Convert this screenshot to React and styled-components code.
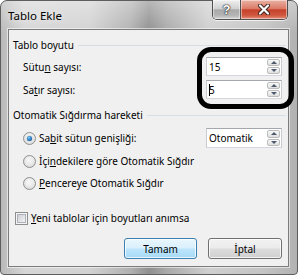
import React from "react";
import styled, { createGlobalStyle } from "styled-components";

const GlobalStyle = createGlobalStyle`
  html, body {
    margin: 0;
    padding: 0;
    background: #ffffff;
  }
  body {
    font-family: "Noto Sans", "DejaVu Sans", sans-serif;
    font-size: 10px;
    color: #000;
  }
`;

const Window = styled.div`
  position: relative;
  width: 298px;
  height: 275px;
  box-sizing: border-box;
  border: 1px solid #5e5e5e;
  border-radius: 7px 7px 4px 4px;
  padding: 0 8px 7px 7px;
  display: flex;
  flex-direction: column;
  background:
    linear-gradient(180deg, rgba(255, 255, 255, 0.35) 0%, rgba(255, 255, 255, 0) 12%),
    linear-gradient(
      90deg,
      #b9b9b9 0%,
      #d6d6d6 8%,
      #d2d2d2 30%,
      #b0b0b0 44%,
      #8f8f8f 50%,
      #a9a9a9 56%,
      #cfcfcf 70%,
      #c4c4c4 88%,
      #b2b2b2 100%
    );
`;

const TitleBar = styled.div`
  height: 28px;
  display: flex;
  justify-content: space-between;
  align-items: flex-start;
`;

const Title = styled.div`
  padding-top: 7px;
  font-size: 11.5px;
  line-height: 15px;
  color: #000;
  text-shadow: 0 0 6px rgba(255, 255, 255, 0.9);
`;

const CaptionButtons = styled.div`
  display: flex;
  margin-top: -1px;
  margin-right: 1px;
  border: 1px solid #4f4f4f;
  border-top: none;
  border-radius: 0 0 5px 5px;
  overflow: hidden;
  box-shadow: 0 1px 0 rgba(255, 255, 255, 0.7);
`;

const CaptionButton = styled.div`
  width: ${(p) => p.$w}px;
  height: 19px;
  display: flex;
  align-items: center;
  justify-content: center;
  background: ${(p) =>
    p.$close
      ? "linear-gradient(180deg, #eab2a4 0%, #dc7c68 45%, #c7412a 52%, #cf563d 80%, #e38f78 100%)"
      : "linear-gradient(180deg, #efefef 0%, #d2d2d2 45%, #a9a9a9 52%, #b4b4b4 80%, #d4d4d4 100%)"};
  box-shadow: inset 0 0 0 1px rgba(255, 255, 255, 0.45);
  & + & {
    border-left: 1px solid #4f4f4f;
  }
`;

const HelpGlyph = styled.span`
  font-family: "Liberation Sans", Arial, sans-serif;
  font-weight: bold;
  font-size: 13px;
  line-height: 13px;
  color: #fff;
  text-shadow: 0 0 1px #222, 0 0 1px #222, 0 0 2px #333;
`;

const Client = styled.div`
  flex: 1;
  box-sizing: border-box;
  background: #f0f0f0;
  border: 1px solid #7c7c7c;
  box-shadow: 0 0 0 1px rgba(255, 255, 255, 0.55);
  padding: 0 6px 0 4px;
  display: flex;
  flex-direction: column;
`;

const GroupHeader = styled.div`
  margin-top: ${(p) => p.$top}px;
  height: 14px;
  display: flex;
  align-items: center;
  line-height: 14px;
  white-space: nowrap;
  &::after {
    content: "";
    flex: 1;
    height: 1px;
    margin-left: 4px;
    margin-right: -4px;
    background: #d5dfe5;
  }
`;

const FieldRow = styled.div`
  margin-top: ${(p) => p.$top}px;
  height: ${(p) => p.$h || 19}px;
  display: flex;
  align-items: center;
  justify-content: space-between;
  padding-left: ${(p) => p.$indent ?? 10}px;
`;

const Label = styled.span`
  line-height: 14px;
  white-space: nowrap;
  & u {
    text-underline-offset: 1px;
  }
`;

const SpinBox = styled.div`
  width: 76px;
  height: ${(p) => p.$h || 19}px;
  box-sizing: border-box;
  display: flex;
  align-items: stretch;
  background: #fff;
  border: 1px solid #abadb3;
  border-color: #a4a7ad #c9ccd2 #d4d7dc #c9ccd2;
  padding: 1px 1px 1px 2px;
`;

const SpinValue = styled.div`
  flex: 1;
  display: flex;
  align-items: center;
  line-height: 14px;
  white-space: nowrap;
`;

const Caret = styled.span`
  display: inline-block;
  width: 1px;
  height: 12px;
  background: #000;
  margin-right: -1px;
`;

const SpinButtons = styled.div`
  width: 13px;
  display: flex;
  flex-direction: column;
  gap: 1px;
`;

const SpinArrow = styled.div`
  flex: 1;
  display: flex;
  align-items: center;
  justify-content: center;
  border: 1px solid #bcbcbc;
  border-radius: 2px;
  background: linear-gradient(180deg, #f8f8f8 0%, #ececec 50%, #dedede 100%);
  &::before {
    content: "";
    border-left: 3px solid transparent;
    border-right: 3px solid transparent;
    ${(p) =>
      p.$down
        ? "border-top: 3px solid #4d5a6e;"
        : "border-bottom: 3px solid #4d5a6e;"}
  }
`;

const OptionRow = styled.div`
  margin-top: ${(p) => p.$top || 0}px;
  height: ${(p) => p.$h || 22}px;
  display: flex;
  align-items: center;
  padding-left: ${(p) => p.$indent ?? 10}px;
`;

const Radio = styled.span`
  width: 13px;
  height: 13px;
  box-sizing: border-box;
  margin-right: 3px;
  border-radius: 50%;
  border: 1px solid #8e8f8f;
  background: radial-gradient(circle at 50% 40%, #ffffff 0%, #e6e6e6 55%, #cfcfcf 100%);
  display: flex;
  align-items: center;
  justify-content: center;
  flex-shrink: 0;
  &::after {
    content: "";
    width: ${(p) => (p.$checked ? 5 : 7)}px;
    height: ${(p) => (p.$checked ? 5 : 7)}px;
    border-radius: 50%;
    background: ${(p) =>
      p.$checked
        ? "radial-gradient(circle at 40% 35%, #8ad0f4 0%, #2f7fc4 45%, #0d4a8a 100%)"
        : "radial-gradient(circle at 40% 35%, #f7f7f7 0%, #e4e4e4 100%)"};
    box-shadow: ${(p) => (p.$checked ? "0 0 1px #174f85" : "none")};
  }
`;

const CheckBox = styled.span`
  width: 13px;
  height: 13px;
  box-sizing: border-box;
  margin-right: 3px;
  border: 1px solid #8e8f8f;
  background: #f4f4f4;
  display: flex;
  align-items: center;
  justify-content: center;
  flex-shrink: 0;
  &::after {
    content: "";
    width: 9px;
    height: 9px;
    box-sizing: border-box;
    border: 1px solid #aeb3b9;
    background: linear-gradient(135deg, #cbcfd5 0%, #f4f4f4 100%);
  }
`;

const ButtonRow = styled.div`
  margin-top: 13px;
  display: flex;
  justify-content: flex-end;
  gap: 11px;
`;

const PushButton = styled.button`
  width: ${(p) => p.$w}px;
  height: 21px;
  box-sizing: border-box;
  padding: 0;
  border-radius: 3px;
  font: inherit;
  color: #000;
  border: 1px solid ${(p) => (p.$primary ? "#3c7fb1" : "#707070")};
  background: ${(p) =>
    p.$primary
      ? "linear-gradient(180deg, #eaf6fd 0%, #d9f0fc 48%, #bee6fd 52%, #a7d9f5 100%)"
      : "linear-gradient(180deg, #f2f2f2 0%, #ebebeb 48%, #dddddd 52%, #cfcfcf 100%)"};
  box-shadow: inset 0 0 0 1px rgba(255, 255, 255, 0.75);
`;

const Annotation = styled.div`
  position: absolute;
  left: 196px;
  top: 46px;
  width: 97px;
  height: 62px;
  box-sizing: border-box;
  border: 5px solid #000;
  border-radius: 14px;
  pointer-events: none;
`;

function CloseGlyph() {
  return (
    <svg width="12" height="11" viewBox="0 0 12 11">
      <path d="M2 1.5 L10 9.5 M10 1.5 L2 9.5" stroke="#3b2320" strokeWidth="4" strokeLinecap="round" />
      <path d="M2 1.5 L10 9.5 M10 1.5 L2 9.5" stroke="#ffffff" strokeWidth="2.2" strokeLinecap="round" />
    </svg>
  );
}

function Spinner({ children, h }) {
  return (
    <SpinBox $h={h}>
      <SpinValue>{children}</SpinValue>
      <SpinButtons>
        <SpinArrow />
        <SpinArrow $down />
      </SpinButtons>
    </SpinBox>
  );
}

export default function App() {
  return (
    <>
      <GlobalStyle />
      <Window>
        <TitleBar>
          <Title>Tablo Ekle</Title>
          <CaptionButtons>
            <CaptionButton $w={27}>
              <HelpGlyph>?</HelpGlyph>
            </CaptionButton>
            <CaptionButton $w={46} $close>
              <CloseGlyph />
            </CaptionButton>
          </CaptionButtons>
        </TitleBar>
        <Client>
          <GroupHeader $top={8}>Tablo boyutu</GroupHeader>
          <FieldRow $top={5}>
            <Label>
              Sütu<u>n</u> sayısı:
            </Label>
            <Spinner>15</Spinner>
          </FieldRow>
          <FieldRow $top={4}>
            <Label>
              Sa<u>t</u>ır sayısı:
            </Label>
            <Spinner>
              <Caret />5
            </Spinner>
          </FieldRow>

          <GroupHeader $top={9}>Otomatik Sığdırma hareketi</GroupHeader>
          <FieldRow $top={5} $h={22} $indent={10}>
            <OptionRow $indent={0}>
              <Radio $checked />
              <Label>
                Sa<u>b</u>it sütun genişliği:
              </Label>
            </OptionRow>
            <Spinner h={20}>Otomatik</Spinner>
          </FieldRow>
          <OptionRow $top={1}>
            <Radio />
            <Label>
              İçi<u>n</u>dekilere göre Otomatik Sığdır
            </Label>
          </OptionRow>
          <OptionRow>
            <Radio />
            <Label>
              <u>P</u>encereye Otomatik Sığdır
            </Label>
          </OptionRow>

          <OptionRow $top={17} $h={14} $indent={2}>
            <CheckBox />
            <Label>
              <u>Y</u>eni tablolar için boyutları anımsa
            </Label>
          </OptionRow>

          <ButtonRow>
            <PushButton $w={73} $primary>
              Tamam
            </PushButton>
            <PushButton $w={74}>İptal</PushButton>
          </ButtonRow>
        </Client>
        <Annotation />
      </Window>
    </>
  );
}
